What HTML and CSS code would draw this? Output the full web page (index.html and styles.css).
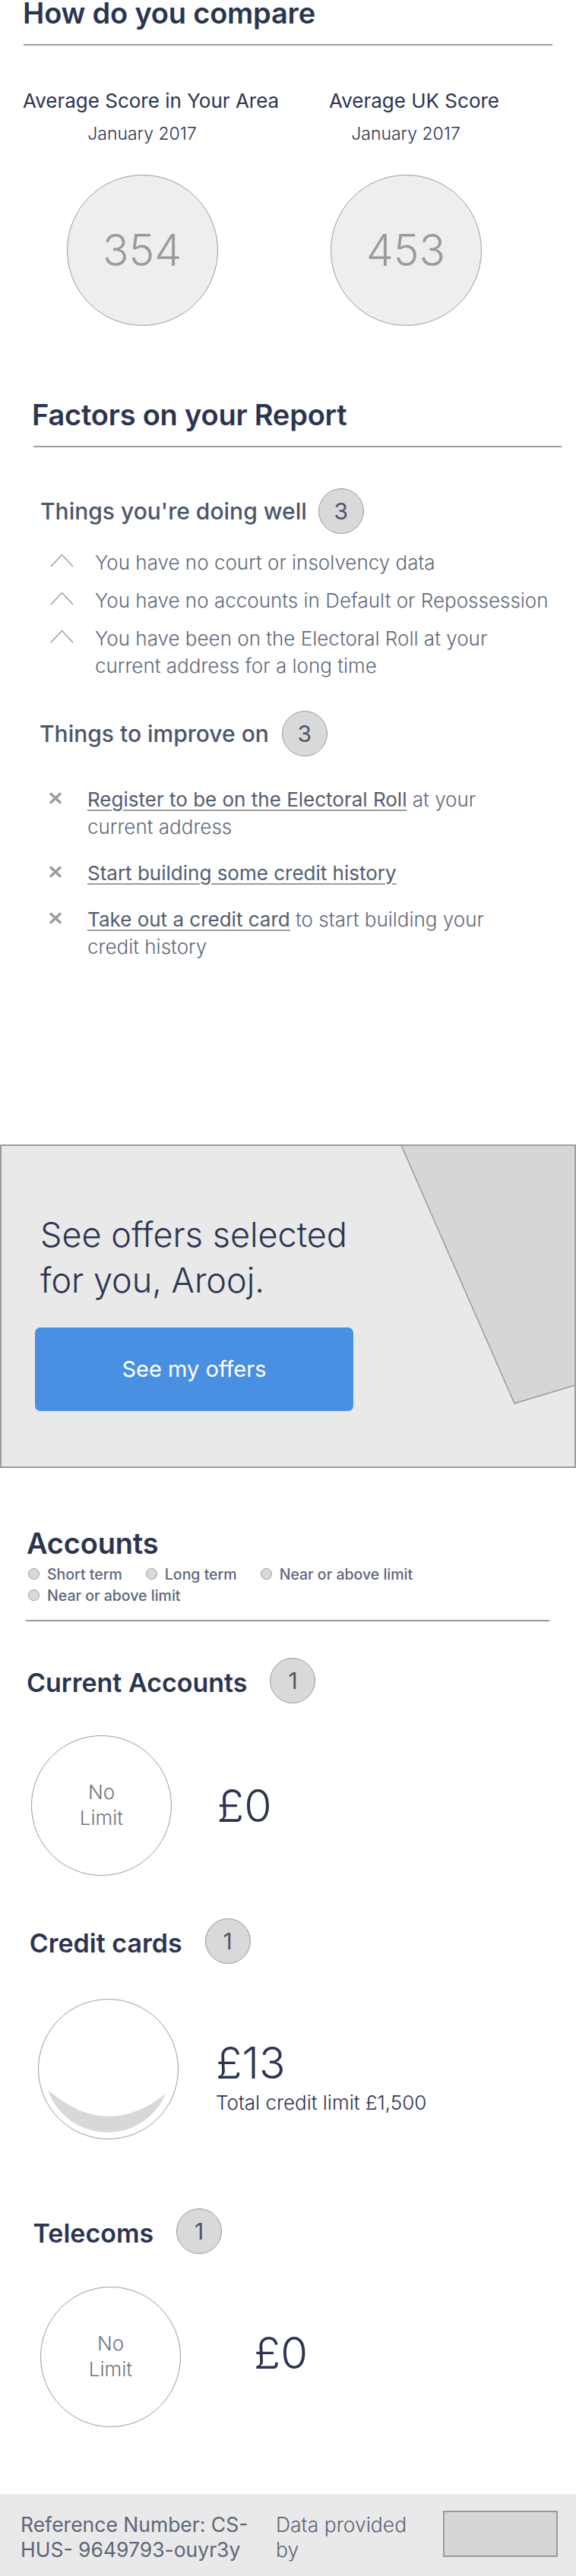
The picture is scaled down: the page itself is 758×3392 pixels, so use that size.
FILE: index.html
```html
<!DOCTYPE html>
<html lang="en">
<head>
<meta charset="utf-8">
<title>Credit report</title>
<link rel="stylesheet" href="styles.css">
</head>
<body>
<section class="compare">
  <h2 class="title">How do you compare</h2>
  <hr class="rule">
  <div class="scores">
    <div class="score score-area">
      <p class="score-label">Average Score in Your Area</p>
      <div class="score-body">
        <p class="score-date">January 2017</p>
        <div class="score-circle">354</div>
      </div>
    </div>
    <div class="score score-uk">
      <p class="score-label">Average UK Score</p>
      <div class="score-body">
        <p class="score-date">January 2017</p>
        <div class="score-circle">453</div>
      </div>
    </div>
  </div>
</section>

<section class="factors">
  <h2 class="title">Factors on your Report</h2>
  <hr class="rule">
  <div class="group-head well">
    <h3 class="group-title">Things you're doing well</h3>
    <span class="badge">3</span>
  </div>
  <ul class="items checks">
    <li class="item"><svg class="chev" viewBox="0 0 31 18"><polyline points="1,17 15.5,1.5 30,17" fill="none" stroke="#9b9b9b" stroke-width="1.5"/></svg><span>You have no court or insolvency data</span></li>
    <li class="item"><svg class="chev" viewBox="0 0 31 18"><polyline points="1,17 15.5,1.5 30,17" fill="none" stroke="#9b9b9b" stroke-width="1.5"/></svg><span>You have no accounts in Default or Repossession</span></li>
    <li class="item"><svg class="chev" viewBox="0 0 31 18"><polyline points="1,17 15.5,1.5 30,17" fill="none" stroke="#9b9b9b" stroke-width="1.5"/></svg><span>You have been on the Electoral Roll at your<br>current address for a long time</span></li>
  </ul>
  <div class="group-head improve">
    <h3 class="group-title">Things to improve on</h3>
    <span class="badge">3</span>
  </div>
  <ul class="items crosses">
    <li class="item"><svg class="cross" viewBox="0 0 18 16"><path d="M2 1.5 L16 14.5 M16 1.5 L2 14.5" stroke="#9b9b9b" stroke-width="3.4" fill="none"/></svg><span><a class="link" href="#">Register to be on the Electoral Roll</a> at your<br>current address</span></li>
    <li class="item"><svg class="cross" viewBox="0 0 18 16"><path d="M2 1.5 L16 14.5 M16 1.5 L2 14.5" stroke="#9b9b9b" stroke-width="3.4" fill="none"/></svg><span><a class="link" href="#">Start building some credit history</a></span></li>
    <li class="item"><svg class="cross" viewBox="0 0 18 16"><path d="M2 1.5 L16 14.5 M16 1.5 L2 14.5" stroke="#9b9b9b" stroke-width="3.4" fill="none"/></svg><span><a class="link" href="#">Take out a credit card</a> to start building your<br>credit history</span></li>
  </ul>
</section>

<section class="offer">
  <svg class="offer-shape" viewBox="0 0 758 426" width="758" height="426"><polygon points="528,1 757,1 757,317 677,341" fill="#d6d6d6" stroke="#9b9b9b" stroke-width="1.5"/></svg>
  <p class="offer-text">See offers selected<br>for you, Arooj.</p>
  <a class="offer-btn" href="#">See my offers</a>
</section>

<section class="accounts">
  <h2 class="title">Accounts</h2>
  <ul class="legend">
    <li class="legend-item"><span class="dot"></span>Short term</li>
    <li class="legend-item"><span class="dot"></span>Long term</li>
    <li class="legend-item"><span class="dot"></span>Near or above limit</li>
    <li class="legend-item"><span class="dot"></span>Near or above limit</li>
  </ul>
  <hr class="rule">

  <div class="acc acc-current">
    <div class="acc-head">
      <h3 class="acc-title">Current Accounts</h3>
      <span class="badge">1</span>
    </div>
    <div class="acc-body">
      <div class="ring"><span>No</span><span>Limit</span></div>
      <p class="amount">£0</p>
    </div>
  </div>

  <div class="acc acc-credit">
    <div class="acc-head">
      <h3 class="acc-title">Credit cards</h3>
      <span class="badge">1</span>
    </div>
    <div class="acc-body">
      <div class="ring">
        <svg class="crescent" viewBox="0 0 185 185" width="185" height="185"><path d="M13 121 A83 83 0 0 0 168 126 Q90 188 13 121 Z" fill="#d8d8d8"/></svg>
      </div>
      <div class="amount-block">
        <p class="amount amount-lg">£13</p>
        <p class="limit-note">Total credit limit £1,500</p>
      </div>
    </div>
  </div>

  <div class="acc acc-tele">
    <div class="acc-head">
      <h3 class="acc-title">Telecoms</h3>
      <span class="badge">1</span>
    </div>
    <div class="acc-body">
      <div class="ring"><span>No</span><span>Limit</span></div>
      <p class="amount">£0</p>
    </div>
  </div>
</section>

<footer class="footer">
  <p class="ref">Reference Number: CS-<br>HUS- 9649793-ouyr3y</p>
  <p class="data">Data provided<br>by</p>
  <div class="logo-box"></div>
</footer>
</body>
</html>
```

FILE: styles.css
```css
* { box-sizing: border-box; }
body {
  margin: 0;
  width: 758px;
  font-family: Inter, "Liberation Sans", sans-serif;
  color: #2c3550;
  background: #fff;
}
p, h2, h3, ul { margin: 0; padding: 0; }
ul { list-style: none; }

.title {
  font-size: 38px;
  font-weight: 600;
  line-height: 34px;
  color: #2c3550;
  letter-spacing: -0.2px;
}
.rule {
  border: 0;
  border-top: 2px solid #9b9b9b;
  height: 0;
  margin: 24px 0 0;
}

/* compare */
.compare { padding-left: 30px; }
.compare .rule { width: 696px; margin-left: 1px; }
.scores { display: flex; margin-top: 56.5px; }
.score-area { width: 403px; }
.score-label { font-size: 26px; line-height: 32px; font-weight: 400; white-space: nowrap; }
.score-body { width: 200px; display: flex; flex-direction: column; align-items: center; }
.score-area .score-body { margin-left: 57px; }
.score-uk .score-body { margin-left: 1px; }
.score-date { font-size: 23px; line-height: 28px; font-weight: 300; margin-top: 13.5px; white-space: nowrap; }
.score-circle {
  width: 199px; height: 199px;
  border: 1.5px solid #9b9b9b;
  border-radius: 50%;
  background: #eeeeee;
  margin-top: 40px;
  display: flex; align-items: center; justify-content: center;
  font-size: 57px; font-weight: 300; color: #9b9b9b;
}

/* factors */
.factors { padding-left: 42px; margin-top: 100px; }
.factors .rule { width: 695px; margin-left: 1.5px; }
.group-head { display: flex; align-items: center; }
.group-head.well { margin-top: 54px; padding-left: 11px; gap: 15px; }
.group-head.improve { margin-top: 41.5px; padding-left: 10px; gap: 17px; }
.group-title { font-size: 30px; font-weight: 500; line-height: 36px; color: #4c5669; white-space: nowrap; }
.badge {
  width: 60px; height: 60px; flex: none;
  border-radius: 50%;
  border: 1.5px solid #9b9b9b;
  background: #d9d9d9;
  display: flex; align-items: center; justify-content: center;
  font-size: 30px; font-weight: 400; color: #4c5669;
}
.items { display: flex; flex-direction: column; }
.item {
  display: flex; align-items: flex-start;
  font-size: 26px; line-height: 36px; font-weight: 300; color: #5f6b7c;
  white-space: nowrap;
}
.checks { margin-top: 19.5px; padding-left: 24px; gap: 14px; }
.chev { width: 31px; height: 18px; flex: none; margin-top: 6.5px; margin-right: 28px; }
.crosses { margin-top: 38.5px; padding-left: 22px; gap: 25px; }
.cross { width: 18px; height: 16px; flex: none; margin-top: 8.5px; margin-right: 33px; }
.link {
  color: #525d70; font-weight: 400;
  text-decoration: underline;
  text-decoration-color: #9b9b9b;
  text-decoration-thickness: 2px;
  text-underline-offset: 4px;
}

/* offer banner */
.offer {
  position: relative;
  margin-top: 242.5px;
  border: 2px solid #9b9b9b;
  background: #e9e9e9;
  padding: 86.6px 0 73px 44px;
}
.offer-shape { position: absolute; top: -2px; left: -2px; }
.offer-text { position: relative; font-size: 45px; line-height: 60px; font-weight: 300; padding-left: 7px; color: #2c3550; }
.offer-btn {
  position: relative;
  display: flex; align-items: center; justify-content: center;
  width: 419px; height: 110px;
  margin-top: 32.4px;
  background: #4a90e2;
  border-radius: 7px;
  color: #fff; font-size: 29px; font-weight: 400;
  text-decoration: none;
}

/* accounts */
.accounts { padding-left: 35px; margin-top: 82.2px; }
.legend {
  display: flex; flex-wrap: wrap;
  width: 562px;
  margin-top: 9.7px; padding-left: 2px;
  column-gap: 31px;
  font-size: 19.5px; line-height: 28px; font-weight: 500; color: #5c6678;
}
.legend-item { display: flex; align-items: center; gap: 10px; white-space: nowrap; }
.dot { width: 15px; height: 15px; border-radius: 50%; background: #d9d9d9; border: 1.5px solid #9b9b9b; flex: none; }
.accounts .rule { width: 689px; margin-left: -1px; margin-top: 18px; }

.acc-head { display: flex; align-items: center; gap: 30px; }
.acc-title { font-size: 34px; font-weight: 600; line-height: 40px; padding-top: 6px; color: #2c3550; white-space: nowrap; }
.acc-body { display: flex; align-items: flex-start; }
.ring {
  position: relative;
  width: 185px; height: 185px; flex: none;
  border-radius: 50%;
  border: 1.5px solid #9b9b9b;
  background: #fff;
  display: flex; flex-direction: column; align-items: center; justify-content: center;
  font-size: 26px; line-height: 34px; font-weight: 300; color: #6f7580;
}
.crescent { position: absolute; top: -1.5px; left: -1.5px; }
.amount { font-size: 59px; line-height: 70px; font-weight: 300; color: #2c3550; }

.acc-current { margin-top: 48px; }
.acc-current .acc-body { margin-top: 42px; }
.acc-current .ring { margin-left: 6px; }
.acc-current .amount { margin-left: 59.6px; margin-top: 58.6px; }

.acc-credit { margin-top: 56px; }
.acc-credit .acc-head { padding-left: 3.7px; }
.acc-credit .acc-body { margin-top: 46px; }
.acc-credit .ring { margin-left: 15px; }
.amount-block { margin-left: 49px; margin-top: 54.3px; }
.amount-lg { font-size: 57px; line-height: 62px; }
.limit-note { font-size: 26px; line-height: 34px; font-weight: 300; margin-top: 4px; white-space: nowrap; color: #2c3550; }

.acc-tele { margin-top: 91px; }
.acc-tele .acc-head { padding-left: 8.5px; }
.acc-tele .acc-body { margin-top: 43px; }
.acc-tele .ring { margin-left: 18px; }
.acc-tele .amount { font-size: 58px; margin-left: 96px; margin-top: 52px; }

/* footer */
.footer {
  display: flex; align-items: flex-start;
  margin-top: 88px;
  height: 108px;
  background: #e9e9e9;
  padding: 24px 24px 0 27px;
}
.ref { width: 309px; font-size: 26.5px; line-height: 33px; font-weight: 400; color: #5c6678; white-space: nowrap; }
.data { width: 190px; margin-left: 27px; font-size: 26.5px; line-height: 33px; font-weight: 300; color: #5c6678; white-space: nowrap; }
.logo-box { width: 151px; height: 61px; margin-left: auto; margin-top: -1.5px; border: 2px solid #9b9b9b; background: #d6d6d6; }
```
